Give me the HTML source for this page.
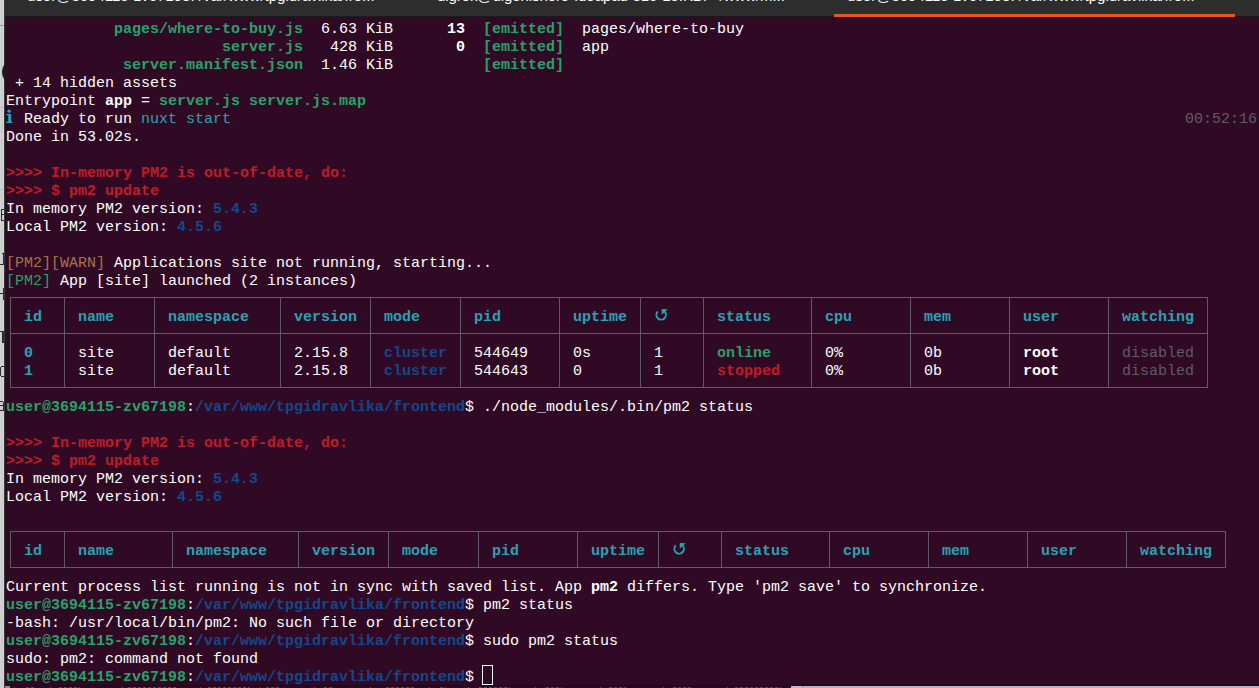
<!DOCTYPE html>
<html>
<head>
<meta charset="utf-8">
<title>Terminal</title>
<style>
html,body{margin:0;padding:0;background:#300a24;}
body{width:1259px;height:688px;overflow:hidden;position:relative;background:#300a24;font-family:"Liberation Mono",monospace;}
#tabbar{position:absolute;left:0;top:0;width:1259px;height:16px;background:#2d2d2d;overflow:hidden;}
#tabline{position:absolute;left:0;top:16px;width:1259px;height:1px;background:#1b1b1b;}
#orange{position:absolute;left:834px;top:14px;width:401px;height:3px;background:#e95420;}
.tab{position:absolute;top:-12px;font-family:"Liberation Sans",sans-serif;font-size:15px;line-height:16px;color:#fff;white-space:pre;}
#lstrip{position:absolute;left:0;top:0;width:4px;height:688px;background:linear-gradient(to right,#d5d5d5 0%,#c9c9c9 55%,#d8d8d8 100%);}
#lborder{position:absolute;left:4px;top:0;width:1px;height:688px;background:#3a3a3a;}
#bot1{position:absolute;left:5px;top:685px;width:1254px;height:1px;background:#111;}
#bot2{position:absolute;left:0;top:686px;width:791px;height:2px;background:#2a0920;}
#bot3{position:absolute;left:791px;top:686px;width:468px;height:2px;background:#b6b6b8;border-left:11px solid #bdbdbd;box-sizing:border-box;}
#bot4{position:absolute;left:802px;top:686px;width:1px;height:2px;background:#9aa0a8;}
.bm{position:absolute;top:686.6px;height:1.4px;}
.lm{position:absolute;}
#lcirc{position:absolute;left:2px;top:62px;width:14px;height:20px;border-radius:50%;background:#1c1c1c;clip-path:inset(0 11px 0 0);}
#botl{position:absolute;left:5px;top:686px;width:5px;height:2px;background:#8f8f8f;}
.t{position:absolute;font-size:15px;line-height:18px;height:18px;color:#ffffff;white-space:pre;}
.b{font-weight:bold;}
.h{position:absolute;height:1px;background:#5e5c64;}
.v{position:absolute;width:1px;background:#5e5c64;}
.ic{position:absolute;overflow:visible;}
#cursor{position:absolute;left:482px;top:665px;width:11px;height:20px;border:1px solid #fff;box-sizing:border-box;}
#info{position:absolute;left:6px;top:108px;}
</style>
</head>
<body>
<div id="tabbar">
<span class="tab" style="left:27px">user@3694115-zv67198: /var/www/tpgidravlika/fro...</span>
<span class="tab" style="left:437px;letter-spacing:-0.08px">digrok@digorlishere-Ideapad-310-15IKB: ~/www/m...</span>
<span class="tab" style="left:847px">user@3694115-zv67198: /var/www/tpgidravlika/fro...</span>
</div>
<div id="tabline"></div>
<div id="orange"></div>
<span class="t b" style="left:114px;top:21px;color:#26a269;">pages/where-to-buy.js</span>
<span class="t" style="left:321px;top:21px;">6.63 KiB</span>
<span class="t b" style="left:447px;top:21px;">13</span>
<span class="t b" style="left:483px;top:21px;color:#26a269;">[emitted]</span>
<span class="t" style="left:582px;top:21px;">pages/where-to-buy</span>
<span class="t b" style="left:222px;top:39px;color:#26a269;">server.js</span>
<span class="t" style="left:330px;top:39px;">428 KiB</span>
<span class="t b" style="left:456px;top:39px;">0</span>
<span class="t b" style="left:483px;top:39px;color:#26a269;">[emitted]</span>
<span class="t" style="left:582px;top:39px;">app</span>
<span class="t b" style="left:123px;top:57px;color:#26a269;">server.manifest.json</span>
<span class="t" style="left:321px;top:57px;">1.46 KiB</span>
<span class="t b" style="left:483px;top:57px;color:#26a269;">[emitted]</span>
<span class="t" style="left:15px;top:75px;">+ 14 hidden assets</span>
<span class="t" style="left:6px;top:93px;">Entrypoint</span>
<span class="t b" style="left:105px;top:93px;">app</span>
<span class="t" style="left:141px;top:93px;">=</span>
<span class="t b" style="left:159px;top:93px;color:#26a269;">server.js server.js.map</span>
<span class="t" style="left:24px;top:111px;">Ready to run</span>
<span class="t" style="left:141px;top:111px;color:#2aa1b3;">nuxt start</span>
<span class="t" style="left:1185px;top:111px;color:#5e5c64;">00:52:16</span>
<span class="t" style="left:6px;top:129px;">Done in 53.02s.</span>
<span class="t b" style="left:6px;top:165px;color:#c01c28;">&gt;&gt;&gt;&gt; In-memory PM2 is out-of-date, do:</span>
<span class="t b" style="left:6px;top:183px;color:#c01c28;">&gt;&gt;&gt;&gt; $ pm2 update</span>
<span class="t" style="left:6px;top:201px;">In memory PM2 version:</span>
<span class="t b" style="left:213px;top:201px;color:#12488b;">5.4.3</span>
<span class="t" style="left:6px;top:219px;">Local PM2 version:</span>
<span class="t b" style="left:177px;top:219px;color:#12488b;">4.5.6</span>
<span class="t b" style="left:6px;top:435px;color:#c01c28;">&gt;&gt;&gt;&gt; In-memory PM2 is out-of-date, do:</span>
<span class="t b" style="left:6px;top:453px;color:#c01c28;">&gt;&gt;&gt;&gt; $ pm2 update</span>
<span class="t" style="left:6px;top:471px;">In memory PM2 version:</span>
<span class="t b" style="left:213px;top:471px;color:#12488b;">5.4.3</span>
<span class="t" style="left:6px;top:489px;">Local PM2 version:</span>
<span class="t b" style="left:177px;top:489px;color:#12488b;">4.5.6</span>
<span class="t" style="left:6px;top:255px;color:#a2734c;">[PM2][WARN]</span>
<span class="t" style="left:114px;top:255px;">Applications site not running, starting...</span>
<span class="t" style="left:6px;top:273px;color:#26a269;">[PM2]</span>
<span class="t" style="left:60px;top:273px;">App [site] launched (2 instances)</span>
<i class="h" style="left:10px;top:297px;width:1198px"></i>
<i class="h" style="left:10px;top:333px;width:1198px"></i>
<i class="h" style="left:10px;top:387px;width:1198px"></i>
<i class="v" style="left:10px;top:297px;height:91px"></i>
<i class="v" style="left:64px;top:297px;height:91px"></i>
<i class="v" style="left:154px;top:297px;height:91px"></i>
<i class="v" style="left:280px;top:297px;height:91px"></i>
<i class="v" style="left:370px;top:297px;height:91px"></i>
<i class="v" style="left:460px;top:297px;height:91px"></i>
<i class="v" style="left:559px;top:297px;height:91px"></i>
<i class="v" style="left:640px;top:297px;height:91px"></i>
<i class="v" style="left:703px;top:297px;height:91px"></i>
<i class="v" style="left:811px;top:297px;height:91px"></i>
<i class="v" style="left:910px;top:297px;height:91px"></i>
<i class="v" style="left:1009px;top:297px;height:91px"></i>
<i class="v" style="left:1108px;top:297px;height:91px"></i>
<i class="v" style="left:1207px;top:297px;height:91px"></i>
<span class="t b" style="left:24px;top:309px;color:#2aa1b3;">id</span>
<span class="t b" style="left:78px;top:309px;color:#2aa1b3;">name</span>
<span class="t b" style="left:168px;top:309px;color:#2aa1b3;">namespace</span>
<span class="t b" style="left:294px;top:309px;color:#2aa1b3;">version</span>
<span class="t b" style="left:384px;top:309px;color:#2aa1b3;">mode</span>
<span class="t b" style="left:474px;top:309px;color:#2aa1b3;">pid</span>
<span class="t b" style="left:573px;top:309px;color:#2aa1b3;">uptime</span>
<svg class="ic" style="left:654px;top:306px" width="16" height="18" viewBox="0 0 16 18"><path d="M3.79 5.54 A4.75 4.75 0 1 0 10.51 5.54" fill="none" stroke="#2aa1b3" stroke-width="1.9"/><path d="M7.7 2.9 L13.8 3.2 L7.7 8.8 Z" fill="#2aa1b3"/></svg>
<span class="t b" style="left:717px;top:309px;color:#2aa1b3;">status</span>
<span class="t b" style="left:825px;top:309px;color:#2aa1b3;">cpu</span>
<span class="t b" style="left:924px;top:309px;color:#2aa1b3;">mem</span>
<span class="t b" style="left:1023px;top:309px;color:#2aa1b3;">user</span>
<span class="t b" style="left:1122px;top:309px;color:#2aa1b3;">watching</span>
<span class="t b" style="left:24px;top:345px;color:#2aa1b3;">0</span>
<span class="t" style="left:78px;top:345px;">site</span>
<span class="t" style="left:168px;top:345px;">default</span>
<span class="t" style="left:294px;top:345px;">2.15.8</span>
<span class="t b" style="left:384px;top:345px;color:#12488b;">cluster</span>
<span class="t" style="left:474px;top:345px;">544649</span>
<span class="t" style="left:573px;top:345px;">0s</span>
<span class="t" style="left:654px;top:345px;">1</span>
<span class="t b" style="left:717px;top:345px;color:#26a269;">online</span>
<span class="t" style="left:825px;top:345px;">0%</span>
<span class="t" style="left:924px;top:345px;">0b</span>
<span class="t b" style="left:1023px;top:345px;">root</span>
<span class="t" style="left:1122px;top:345px;color:#5e5c64;">disabled</span>
<span class="t b" style="left:24px;top:363px;color:#2aa1b3;">1</span>
<span class="t" style="left:78px;top:363px;">site</span>
<span class="t" style="left:168px;top:363px;">default</span>
<span class="t" style="left:294px;top:363px;">2.15.8</span>
<span class="t b" style="left:384px;top:363px;color:#12488b;">cluster</span>
<span class="t" style="left:474px;top:363px;">544643</span>
<span class="t" style="left:573px;top:363px;">0</span>
<span class="t" style="left:654px;top:363px;">1</span>
<span class="t b" style="left:717px;top:363px;color:#c01c28;">stopped</span>
<span class="t" style="left:825px;top:363px;">0%</span>
<span class="t" style="left:924px;top:363px;">0b</span>
<span class="t b" style="left:1023px;top:363px;">root</span>
<span class="t" style="left:1122px;top:363px;color:#5e5c64;">disabled</span>
<span class="t b" style="left:6px;top:399px;color:#26a269;">user@3694115-zv67198</span>
<span class="t" style="left:186px;top:399px;">:</span>
<span class="t b" style="left:195px;top:399px;color:#12488b;">/var/www/tpgidravlika/frontend</span>
<span class="t" style="left:465px;top:399px;">$ ./node_modules/.bin/pm2 status</span>
<i class="h" style="left:10px;top:531px;width:1216px"></i>
<i class="h" style="left:10px;top:567px;width:1216px"></i>
<i class="v" style="left:10px;top:531px;height:37px"></i>
<i class="v" style="left:64px;top:531px;height:37px"></i>
<i class="v" style="left:172px;top:531px;height:37px"></i>
<i class="v" style="left:298px;top:531px;height:37px"></i>
<i class="v" style="left:388px;top:531px;height:37px"></i>
<i class="v" style="left:478px;top:531px;height:37px"></i>
<i class="v" style="left:577px;top:531px;height:37px"></i>
<i class="v" style="left:658px;top:531px;height:37px"></i>
<i class="v" style="left:721px;top:531px;height:37px"></i>
<i class="v" style="left:829px;top:531px;height:37px"></i>
<i class="v" style="left:928px;top:531px;height:37px"></i>
<i class="v" style="left:1027px;top:531px;height:37px"></i>
<i class="v" style="left:1126px;top:531px;height:37px"></i>
<i class="v" style="left:1225px;top:531px;height:37px"></i>
<span class="t b" style="left:24px;top:543px;color:#2aa1b3;">id</span>
<span class="t b" style="left:78px;top:543px;color:#2aa1b3;">name</span>
<span class="t b" style="left:186px;top:543px;color:#2aa1b3;">namespace</span>
<span class="t b" style="left:312px;top:543px;color:#2aa1b3;">version</span>
<span class="t b" style="left:402px;top:543px;color:#2aa1b3;">mode</span>
<span class="t b" style="left:492px;top:543px;color:#2aa1b3;">pid</span>
<span class="t b" style="left:591px;top:543px;color:#2aa1b3;">uptime</span>
<svg class="ic" style="left:672px;top:540px" width="16" height="18" viewBox="0 0 16 18"><path d="M3.79 5.54 A4.75 4.75 0 1 0 10.51 5.54" fill="none" stroke="#2aa1b3" stroke-width="1.9"/><path d="M7.7 2.9 L13.8 3.2 L7.7 8.8 Z" fill="#2aa1b3"/></svg>
<span class="t b" style="left:735px;top:543px;color:#2aa1b3;">status</span>
<span class="t b" style="left:843px;top:543px;color:#2aa1b3;">cpu</span>
<span class="t b" style="left:942px;top:543px;color:#2aa1b3;">mem</span>
<span class="t b" style="left:1041px;top:543px;color:#2aa1b3;">user</span>
<span class="t b" style="left:1140px;top:543px;color:#2aa1b3;">watching</span>
<span class="t" style="left:6px;top:579px;">Current process list running is not in sync with saved list. App</span>
<span class="t b" style="left:591px;top:579px;">pm2</span>
<span class="t" style="left:627px;top:579px;">differs. Type &#x27;pm2 save&#x27; to synchronize.</span>
<span class="t b" style="left:6px;top:597px;color:#26a269;">user@3694115-zv67198</span>
<span class="t" style="left:186px;top:597px;">:</span>
<span class="t b" style="left:195px;top:597px;color:#12488b;">/var/www/tpgidravlika/frontend</span>
<span class="t" style="left:465px;top:597px;">$ pm2 status</span>
<span class="t" style="left:6px;top:615px;">-bash: /usr/local/bin/pm2: No such file or directory</span>
<span class="t b" style="left:6px;top:633px;color:#26a269;">user@3694115-zv67198</span>
<span class="t" style="left:186px;top:633px;">:</span>
<span class="t b" style="left:195px;top:633px;color:#12488b;">/var/www/tpgidravlika/frontend</span>
<span class="t" style="left:465px;top:633px;">$ sudo pm2 status</span>
<span class="t" style="left:6px;top:651px;">sudo: pm2: command not found</span>
<span class="t b" style="left:6px;top:669px;color:#26a269;">user@3694115-zv67198</span>
<span class="t" style="left:186px;top:669px;">:</span>
<span class="t b" style="left:195px;top:669px;color:#12488b;">/var/www/tpgidravlika/frontend</span>
<span class="t" style="left:465px;top:669px;">$</span>
<svg id="info" width="9" height="18" viewBox="0 0 9 18"><circle cx="3.1" cy="3.15" r="1.7" fill="#2aa1b3"/><path d="M0.3 5.9 H5.2 V13.8 H6.3 V15.1 H0.1 V13.8 H2.2 V7.2 H0.3 Z" fill="#2aa1b3"/></svg>
<div id="cursor"></div>
<div id="bot1"></div><div id="bot2"></div><div id="bot3"></div><div id="bot4"></div>
<i class="bm" style="left:14px;width:1px;background:#77747c;opacity:0.6"></i><i class="bm" style="left:50px;width:1px;background:#77747c;opacity:0.6"></i><i class="bm" style="left:122px;width:1px;background:#77747c;opacity:0.6"></i><i class="bm" style="left:200px;width:1px;background:#77747c;opacity:0.6"></i><i class="bm" style="left:259px;width:1px;background:#77747c;opacity:0.6"></i><i class="bm" style="left:314px;width:1px;background:#77747c;opacity:0.6"></i><i class="bm" style="left:370px;width:1px;background:#77747c;opacity:0.6"></i><i class="bm" style="left:429px;width:1px;background:#77747c;opacity:0.6"></i><i class="bm" style="left:468px;width:1px;background:#77747c;opacity:0.6"></i><i class="bm" style="left:535px;width:1px;background:#77747c;opacity:0.6"></i><i class="bm" style="left:600px;width:1px;background:#77747c;opacity:0.6"></i><i class="bm" style="left:663px;width:1px;background:#77747c;opacity:0.6"></i><i class="bm" style="left:727px;width:1px;background:#77747c;opacity:0.6"></i><i class="bm" style="left:26px;width:3px;background:#2aa1b3;opacity:0.5"></i><i class="bm" style="left:31px;width:3px;background:#2aa1b3;opacity:0.5"></i><i class="bm" style="left:59px;width:3px;background:#2aa1b3;opacity:0.5"></i><i class="bm" style="left:64px;width:3px;background:#2aa1b3;opacity:0.5"></i><i class="bm" style="left:69px;width:3px;background:#2aa1b3;opacity:0.5"></i><i class="bm" style="left:74px;width:3px;background:#2aa1b3;opacity:0.5"></i><i class="bm" style="left:79px;width:1px;background:#2aa1b3;opacity:0.5"></i><i class="bm" style="left:128px;width:3px;background:#2aa1b3;opacity:0.5"></i><i class="bm" style="left:133px;width:3px;background:#2aa1b3;opacity:0.5"></i><i class="bm" style="left:138px;width:3px;background:#2aa1b3;opacity:0.5"></i><i class="bm" style="left:143px;width:3px;background:#2aa1b3;opacity:0.5"></i><i class="bm" style="left:148px;width:3px;background:#2aa1b3;opacity:0.5"></i><i class="bm" style="left:153px;width:3px;background:#2aa1b3;opacity:0.5"></i><i class="bm" style="left:158px;width:3px;background:#2aa1b3;opacity:0.5"></i><i class="bm" style="left:163px;width:3px;background:#2aa1b3;opacity:0.5"></i><i class="bm" style="left:168px;width:3px;background:#2aa1b3;opacity:0.5"></i><i class="bm" style="left:173px;width:3px;background:#2aa1b3;opacity:0.5"></i><i class="bm" style="left:208px;width:3px;background:#2aa1b3;opacity:0.5"></i><i class="bm" style="left:213px;width:3px;background:#2aa1b3;opacity:0.5"></i><i class="bm" style="left:218px;width:3px;background:#2aa1b3;opacity:0.5"></i><i class="bm" style="left:223px;width:3px;background:#2aa1b3;opacity:0.5"></i><i class="bm" style="left:228px;width:3px;background:#2aa1b3;opacity:0.5"></i><i class="bm" style="left:233px;width:3px;background:#2aa1b3;opacity:0.5"></i><i class="bm" style="left:238px;width:3px;background:#2aa1b3;opacity:0.5"></i><i class="bm" style="left:243px;width:3px;background:#2aa1b3;opacity:0.5"></i><i class="bm" style="left:248px;width:2px;background:#2aa1b3;opacity:0.5"></i><i class="bm" style="left:266px;width:3px;background:#2aa1b3;opacity:0.5"></i><i class="bm" style="left:271px;width:3px;background:#2aa1b3;opacity:0.5"></i><i class="bm" style="left:276px;width:3px;background:#2aa1b3;opacity:0.5"></i><i class="bm" style="left:324px;width:3px;background:#2aa1b3;opacity:0.5"></i><i class="bm" style="left:329px;width:3px;background:#2aa1b3;opacity:0.5"></i><i class="bm" style="left:386px;width:3px;background:#2aa1b3;opacity:0.5"></i><i class="bm" style="left:391px;width:3px;background:#2aa1b3;opacity:0.5"></i><i class="bm" style="left:396px;width:3px;background:#2aa1b3;opacity:0.5"></i><i class="bm" style="left:401px;width:3px;background:#2aa1b3;opacity:0.5"></i><i class="bm" style="left:406px;width:3px;background:#2aa1b3;opacity:0.5"></i><i class="bm" style="left:411px;width:3px;background:#2aa1b3;opacity:0.5"></i><i class="bm" style="left:440px;width:3px;background:#2aa1b3;opacity:0.5"></i><i class="bm" style="left:445px;width:1px;background:#2aa1b3;opacity:0.5"></i><i class="bm" style="left:479px;width:3px;background:#2aa1b3;opacity:0.5"></i><i class="bm" style="left:484px;width:3px;background:#2aa1b3;opacity:0.5"></i><i class="bm" style="left:489px;width:3px;background:#2aa1b3;opacity:0.5"></i><i class="bm" style="left:494px;width:3px;background:#2aa1b3;opacity:0.5"></i><i class="bm" style="left:499px;width:3px;background:#2aa1b3;opacity:0.5"></i><i class="bm" style="left:504px;width:3px;background:#2aa1b3;opacity:0.5"></i><i class="bm" style="left:509px;width:1px;background:#2aa1b3;opacity:0.5"></i><i class="bm" style="left:546px;width:3px;background:#2aa1b3;opacity:0.5"></i><i class="bm" style="left:551px;width:3px;background:#2aa1b3;opacity:0.5"></i><i class="bm" style="left:556px;width:3px;background:#2aa1b3;opacity:0.5"></i><i class="bm" style="left:561px;width:1px;background:#2aa1b3;opacity:0.5"></i><i class="bm" style="left:609px;width:3px;background:#2aa1b3;opacity:0.5"></i><i class="bm" style="left:614px;width:3px;background:#2aa1b3;opacity:0.5"></i><i class="bm" style="left:619px;width:3px;background:#2aa1b3;opacity:0.5"></i><i class="bm" style="left:624px;width:2px;background:#2aa1b3;opacity:0.5"></i><i class="bm" style="left:673px;width:3px;background:#2aa1b3;opacity:0.5"></i><i class="bm" style="left:678px;width:3px;background:#2aa1b3;opacity:0.5"></i><i class="bm" style="left:683px;width:3px;background:#2aa1b3;opacity:0.5"></i><i class="bm" style="left:688px;width:3px;background:#2aa1b3;opacity:0.5"></i><i class="bm" style="left:735px;width:3px;background:#2aa1b3;opacity:0.5"></i><i class="bm" style="left:740px;width:3px;background:#2aa1b3;opacity:0.5"></i><i class="bm" style="left:745px;width:3px;background:#2aa1b3;opacity:0.5"></i><i class="bm" style="left:750px;width:3px;background:#2aa1b3;opacity:0.5"></i><i class="bm" style="left:755px;width:3px;background:#2aa1b3;opacity:0.5"></i><i class="bm" style="left:760px;width:3px;background:#2aa1b3;opacity:0.5"></i><i class="bm" style="left:765px;width:3px;background:#2aa1b3;opacity:0.5"></i><i class="bm" style="left:770px;width:3px;background:#2aa1b3;opacity:0.5"></i><i class="bm" style="left:775px;width:3px;background:#2aa1b3;opacity:0.5"></i><i class="bm" style="left:780px;width:1px;background:#2aa1b3;opacity:0.5"></i><div id="botl"></div>
<div id="lstrip"></div><div id="lborder"></div>
<i class="lm" style="left:0px;top:25px;width:4px;height:1px;background:#9c9c9c"></i><i class="lm" style="left:0px;top:107px;width:4px;height:1px;background:#bdbdbd"></i><i class="lm" style="left:0px;top:189px;width:4px;height:1px;background:#bdbdbd"></i><i class="lm" style="left:1px;top:209px;width:1px;height:12px;background:#2b2b2b"></i><i class="lm" style="left:1px;top:209px;width:3px;height:1px;background:#2b2b2b"></i><i class="lm" style="left:1px;top:214px;width:3px;height:1px;background:#2b2b2b"></i><i class="lm" style="left:1px;top:220px;width:3px;height:1px;background:#2b2b2b"></i><i class="lm" style="left:2px;top:253px;width:2px;height:1px;background:#2b2b2b"></i><i class="lm" style="left:3px;top:253px;width:1px;height:12px;background:#2b2b2b"></i><i class="lm" style="left:0px;top:264px;width:3px;height:1px;background:#2b2b2b"></i><i class="lm" style="left:3px;top:288px;width:1px;height:12px;background:#2b2b2b"></i><i class="lm" style="left:0px;top:293px;width:3px;height:1px;background:#2b2b2b"></i><i class="lm" style="left:0px;top:331px;width:4px;height:1px;background:#2b2b2b"></i><i class="lm" style="left:2px;top:331px;width:2px;height:12px;background:#2b2b2b"></i><i class="lm" style="left:1px;top:366px;width:3px;height:1px;background:#2b2b2b"></i><i class="lm" style="left:0px;top:367px;width:1px;height:9px;background:#2b2b2b"></i><i class="lm" style="left:1px;top:376px;width:3px;height:1px;background:#2b2b2b"></i><i class="lm" style="left:0px;top:401px;width:3px;height:1px;background:#2b2b2b"></i><i class="lm" style="left:3px;top:402px;width:1px;height:9px;background:#2b2b2b"></i><i class="lm" style="left:0px;top:405px;width:3px;height:1px;background:#2b2b2b"></i><i class="lm" style="left:0px;top:410px;width:3px;height:1px;background:#2b2b2b"></i><i id="lcirc"></i>
</body>
</html>
